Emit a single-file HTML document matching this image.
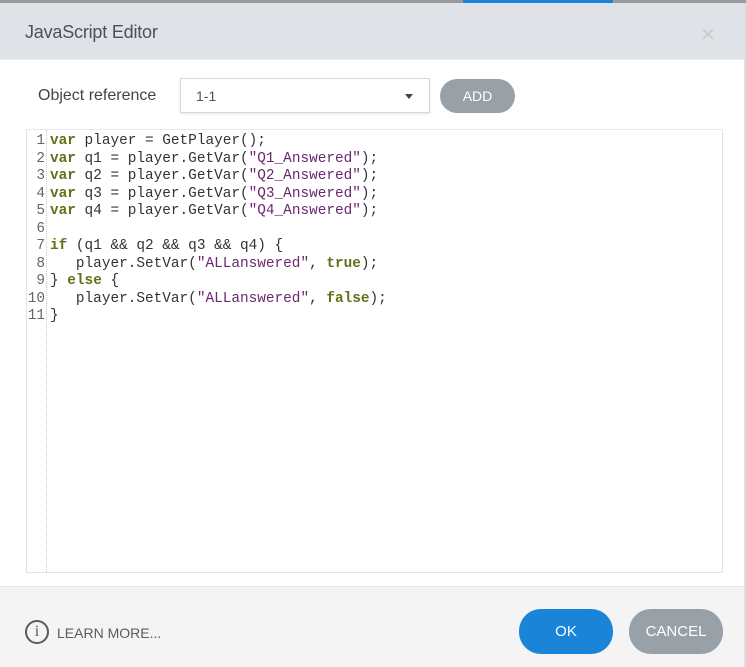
<!DOCTYPE html>
<html><head><meta charset="utf-8"><style>
*{margin:0;padding:0;box-sizing:border-box}
body{width:746px;height:667px;overflow:hidden;background:#fff;font-family:"Liberation Sans",sans-serif;position:relative}
.topline{position:absolute;left:0;top:0;width:746px;height:3px;background:#9a9a9a}
.blue{position:absolute;left:463px;top:0;width:150px;height:3px;background:#1a85d8}
.hdr{position:absolute;left:0;top:3px;width:746px;height:57px;background:#dfe3e7;border-bottom:1px solid #e8ecef}
.hdr .t{position:absolute;left:25px;top:19px;font-size:18px;color:#4a5258;letter-spacing:-0.2px}
.x{position:absolute;left:700px;top:21px;font-size:19px;color:#c8ccd0}
.lab{position:absolute;left:38px;top:87px;font-size:16px;color:#3e464c}
.sel{position:absolute;left:180px;top:78px;width:250px;height:35px;border:1px solid #d5d9dc;box-shadow:0 1px 2px rgba(0,0,0,.1)}
.sel span{position:absolute;left:15px;top:9px;font-size:14px;color:#555}
.sel i{position:absolute;right:16px;top:15px;border-left:4px solid transparent;border-right:4px solid transparent;border-top:5px solid #444}
.add{position:absolute;left:440px;top:79px;width:75px;height:34px;border-radius:17px;background:#98a1a8;color:#fff;font-size:14px;text-align:center;line-height:34px}
.ed{position:absolute;left:26px;top:129px;width:697px;height:444px;border:1px solid #dfe3e6;border-top-color:#e6e9ec}
.gut{position:absolute;left:0;top:0;width:20px;height:100%;border-right:1px dotted #c8c8c8}
pre{font-family:"Liberation Mono",monospace;font-size:14.4px;line-height:17.5px;position:absolute;top:3px}
.ln{left:0;width:18px;text-align:right;color:#666}
.code{left:23px;color:#333}
.k{color:#5f7317;font-weight:bold}
.s{color:#6b2870}
.ftr{position:absolute;left:0;top:586px;width:746px;height:81px;background:#f4f4f4;border-top:1px solid #e4e6e8}
.info{position:absolute;left:25px;top:620px;width:24px;height:24px;border:2px solid #555d62;border-radius:50%;text-align:center;font-family:"Liberation Serif",serif;font-size:16px;line-height:20px;color:#555d62}
.lm{position:absolute;left:57px;top:625px;font-size:14px;color:#555d62}
.ok{position:absolute;left:519px;top:609px;width:94px;height:45px;border-radius:22px;background:#1a85d8;color:#fff;text-align:center;line-height:45px;font-size:15px}
.cn{position:absolute;left:629px;top:609px;width:94px;height:45px;border-radius:22px;background:#98a1a8;color:#fff;text-align:center;line-height:45px;font-size:15px}
.rb{position:absolute;left:744px;top:3px;width:2px;height:664px;background:#e0e0e0}
</style></head><body>
<div class="topline"></div><div class="blue"></div>
<div class="hdr"><div class="t">JavaScript Editor</div><div class="x">✕</div></div>
<div class="lab">Object reference</div>
<div class="sel"><span>1-1</span><i></i></div>
<div class="add">ADD</div>
<div class="ed"><div class="gut"></div>
<pre class="ln">1
2
3
4
5
6
7
8
9
10
11</pre>
<pre class="code"><span class="k">var</span> player = GetPlayer();
<span class="k">var</span> q1 = player.GetVar(<span class="s">"Q1_Answered"</span>);
<span class="k">var</span> q2 = player.GetVar(<span class="s">"Q2_Answered"</span>);
<span class="k">var</span> q3 = player.GetVar(<span class="s">"Q3_Answered"</span>);
<span class="k">var</span> q4 = player.GetVar(<span class="s">"Q4_Answered"</span>);

<span class="k">if</span> (q1 &amp;&amp; q2 &amp;&amp; q3 &amp;&amp; q4) {
   player.SetVar(<span class="s">"ALLanswered"</span>, <span class="k">true</span>);
} <span class="k">else</span> {
   player.SetVar(<span class="s">"ALLanswered"</span>, <span class="k">false</span>);
}</pre>
</div>
<div class="ftr"></div>
<div class="info">i</div><div class="lm">LEARN MORE...</div>
<div class="ok">OK</div><div class="cn">CANCEL</div>
<div class="rb"></div>
</body></html>
